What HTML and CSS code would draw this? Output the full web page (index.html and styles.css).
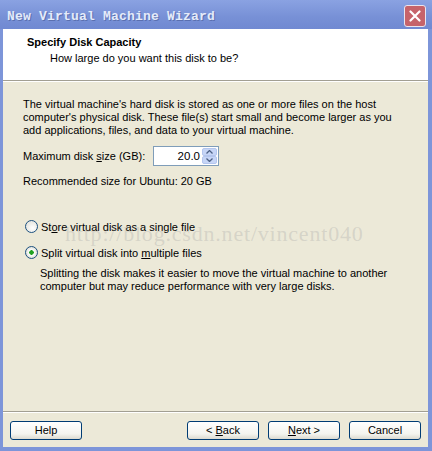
FILE: index.html
```html
<!DOCTYPE html>
<html lang="en">
<head>
    <meta charset="UTF-8">
    <title>New Virtual Machine Wizard</title>
    <link rel="stylesheet" href="styles.css">
</head>
<body>

    <div class="window">
        <div class="titlebar">
            <span class="title">New Virtual Machine Wizard</span>
            <span class="close-btn">
                <svg width="12" height="12" viewBox="0 0 12 12"><path d="M1.5 1.5 L10.5 10.5 M10.5 1.5 L1.5 10.5" stroke="#fff" stroke-width="2.2" stroke-linecap="round"/></svg>
            </span>
        </div>

        <div class="frame">
            <!-- Header -->
            <div class="wiz-header">
                <h2>Specify Disk Capacity</h2>
                <p>How large do you want this disk to be?</p>
            </div>

            <!-- Body -->
            <div class="wiz-body">
                <p class="intro">The virtual machine's hard disk is stored as one or more files on the host computer's physical disk. These file(s) start small and become larger as you add applications, files, and data to your virtual machine.</p>

                <div class="size-row">
                    <label>Maximum disk <u>s</u>ize (GB):</label>
                    <div class="spinner">
                        <span class="spin-value">20.0</span>
                        <span class="spin-btns">
                            <span class="spin-up">
                                <svg width="7" height="4" viewBox="0 0 7 4"><path d="M0.5 3.5 L3.5 0.5 L6.5 3.5" fill="none" stroke="#4d6185" stroke-width="1.3"/></svg>
                            </span>
                            <span class="spin-down">
                                <svg width="7" height="4" viewBox="0 0 7 4"><path d="M0.5 0.5 L3.5 3.5 L6.5 0.5" fill="none" stroke="#4d6185" stroke-width="1.3"/></svg>
                            </span>
                        </span>
                    </div>
                </div>

                <p class="recommend">Recommended size for Ubuntu: 20 GB</p>

                <div class="options">
                    <div class="radio-row">
                        <span class="radio"></span>
                        <span>St<u>o</u>re virtual disk as a single file</span>
                    </div>
                    <div class="radio-row">
                        <span class="radio checked"></span>
                        <span>Split virtual disk into <u>m</u>ultiple files</span>
                    </div>
                    <p class="split-note">Splitting the disk makes it easier to move the virtual machine to another computer but may reduce performance with very large disks.</p>
                    <span class="watermark">http://blog.csdn.net/vincent040</span>
                </div>
            </div>

            <!-- Footer buttons -->
            <div class="wiz-footer">
                <button class="btn">Help</button>
                <div class="spacer"></div>
                <button class="btn">&lt; <u>B</u>ack</button>
                <button class="btn"><u>N</u>ext &gt;</button>
                <button class="btn">Cancel</button>
            </div>
        </div>
    </div>

</body>
</html>
```

FILE: styles.css
```css
/* General Styling */
body {
    margin: 0;
    padding: 0;
    font-family: 'Liberation Sans', Arial, sans-serif;
    font-size: 11px;
    color: #000;
    background: #ece9d8;
}

/* Window */
.window {
    width: 432px;
    height: 451px;
    display: flex;
    flex-direction: column;
    background: #7d95d9;
    box-sizing: border-box;
}

.titlebar {
    height: 29px;
    display: flex;
    align-items: center;
    justify-content: space-between;
    padding: 0 6px 0 7px;
    background: linear-gradient(#8aa2e2, #7790d6 60%, #7089d2);
}

.title {
    font-family: 'Liberation Mono', monospace;
    font-weight: bold;
    font-size: 13px;
    color: #e4ebfa;
    text-shadow: 1px 1px 0 #5a6fb0;
    letter-spacing: 0.2px;
    padding-top: 3px;
}

.close-btn {
    width: 20px;
    height: 20px;
    margin-top: 2px;
    display: flex;
    align-items: center;
    justify-content: center;
    background: #c6636a;
    border: 1px solid #e9e4ee;
    border-radius: 3px;
}

.frame {
    flex: 1;
    display: flex;
    flex-direction: column;
    margin: 0 4px 4px 3px;
    background: #ece9d8;
}

/* Header */
.wiz-header {
    height: 52px;
    background: #fff;
    border-bottom: 1px solid #a29f93;
    box-shadow: 0 1px 0 #fff;
    padding: 7px 0 0 24px;
    box-sizing: border-box;
}

.wiz-header h2 {
    margin: 0;
    font-size: 11px;
    font-weight: bold;
    line-height: 13px;
}

.wiz-header p {
    margin: 3px 0 0 23px;
    line-height: 13px;
}

/* Body */
.wiz-body {
    flex: 1;
    padding: 17px 14px 0 20px;
    border-bottom: 1px solid #a29f93;
}

.intro {
    margin: 0;
    max-width: 371px;
    line-height: 13px;
}

.size-row {
    display: flex;
    align-items: center;
    margin-top: 9px;
}

.size-row label {
    width: 130px;
}

.spinner {
    width: 66px;
    height: 20px;
    display: flex;
    align-items: center;
    background: #fff;
    border: 1px solid #7f9db9;
    box-sizing: border-box;
}

.spin-value {
    flex: 1;
    text-align: right;
    padding-right: 2px;
    font-size: 11.5px;
}

.spin-btns {
    width: 15px;
    height: 16px;
    display: flex;
    flex-direction: column;
    margin-right: 1px;
}

.spin-up, .spin-down {
    flex: 1;
    display: flex;
    align-items: center;
    justify-content: center;
    background: #c6d5f6;
    border: 1px solid #b4c6ee;
    border-radius: 2px;
}

.recommend {
    margin: 9px 0 0;
    line-height: 13px;
}

/* Options */
.options {
    position: relative;
    margin-top: 32px;
}

.radio-row {
    display: flex;
    align-items: center;
    gap: 3px;
    height: 13px;
    margin-bottom: 13px;
    margin-left: 2px;
}

.radio {
    width: 11px;
    height: 11px;
    border: 1px solid #1c5180;
    border-radius: 50%;
    background: radial-gradient(circle at 60% 65%, #fff, #dcdcd4);
}

.radio.checked {
    background: radial-gradient(circle, #21a121 0 2px, #fff 2.5px, #dcdcd4 6px);
}

.split-note {
    margin: -5px 0 0 17px;
    line-height: 13px;
}

.watermark {
    position: absolute;
    left: 42px;
    top: 2px;
    font-family: 'Liberation Serif', serif;
    font-size: 22px;
    line-height: 24px;
    color: rgba(160, 160, 160, 0.3);
    white-space: nowrap;
    letter-spacing: 0.8px;
}

/* Footer */
.wiz-footer {
    height: 34px;
    display: flex;
    align-items: center;
    gap: 9px;
    padding: 0 7px;
    border-top: 1px solid #fff;
}

.spacer {
    flex: 1;
}

.btn {
    width: 72px;
    height: 19px;
    padding: 0;
    font-family: 'Liberation Sans', Arial, sans-serif;
    font-size: 11px;
    color: #000;
    background: linear-gradient(#fff, #f4f4ef 70%, #dcdad0);
    border: 1px solid #003c74;
    border-radius: 3px;
}
```
